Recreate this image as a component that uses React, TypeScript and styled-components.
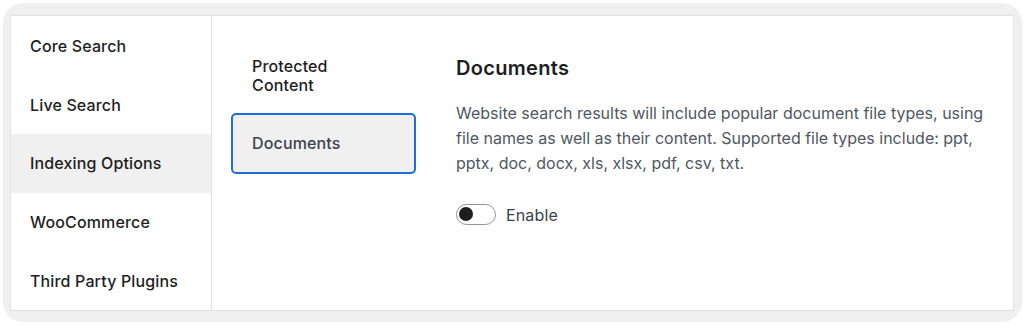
import React from "react"
import styled, { createGlobalStyle } from "styled-components"

const GlobalStyle = createGlobalStyle`
  html, body {
    margin: 0;
    padding: 0;
    background: #ffffff;
  }
  body {
    font-family: Inter, "Noto Sans", "Liberation Sans", sans-serif;
    -webkit-font-smoothing: antialiased;
  }
`

const Frame = styled.div`
  box-sizing: border-box;
  margin: 3px 2px 4px 3px;
  height: 319px;
  padding: 12px 8px 11px 7px;
  background: #f0f0f0;
  border-radius: 20px;
`

const Panel = styled.div`
  box-sizing: border-box;
  height: 100%;
  display: flex;
  background: #ffffff;
  border: 1px solid #e2e2e2;
`

const SideNav = styled.nav`
  width: 200px;
  flex-shrink: 0;
  border-right: 1px solid #e0e0e0;
  display: flex;
  flex-direction: column;
  padding-top: 1px;
`

const NavItem = styled.div<{ $active?: boolean }>`
  height: 59px;
  display: flex;
  align-items: center;
  padding-left: 19px;
  font-size: 16px;
  letter-spacing: 0.15px;
  font-weight: 500;
  color: #1e1e1e;
  background: ${(p) => (p.$active ? "#f0f0f0" : "transparent")};
`

const SubNav = styled.div`
  width: 204px;
  flex-shrink: 0;
  padding: 41px 0 0 19px;
  display: flex;
  flex-direction: column;
  gap: 18px;
`

const SubItem = styled.div<{ $active?: boolean }>`
  box-sizing: border-box;
  width: 185px;
  padding: ${(p) => (p.$active ? "17px 19px" : "0 21px")};
  min-height: ${(p) => (p.$active ? "61px" : "auto")};
  display: flex;
  align-items: center;
  font-size: 16px;
  letter-spacing: 0.15px;
  font-weight: 500;
  line-height: 19px;
  color: ${(p) => (p.$active ? "#3c434a" : "#1e1e1e")};
  background: ${(p) => (p.$active ? "#f0f0f0" : "transparent")};
  border: ${(p) => (p.$active ? "2px solid #1d6ce0" : "none")};
  border-radius: 5px;
`

const Content = styled.section`
  flex: 1;
  padding: 38px 20px 0 21px;
`

const Heading = styled.h2`
  margin: 0 0 19px;
  font-size: 20px;
  letter-spacing: 0.3px;
  font-weight: 600;
  line-height: 28px;
  color: #1e1e1e;
`

const Description = styled.p`
  margin: 0;
  max-width: 540px;
  font-size: 16px;
  letter-spacing: 0;
  line-height: 25px;
  color: #50575e;
`

const ToggleRow = styled.label`
  display: flex;
  align-items: center;
  gap: 10px;
  margin-top: 28px;
  font-size: 16px;
  letter-spacing: 0.15px;
  color: #3c434a;
`

const Track = styled.span`
  box-sizing: border-box;
  position: relative;
  width: 40px;
  height: 21px;
  border: 1.5px solid #949494;
  border-radius: 11px;
  background: #ffffff;
`

const Knob = styled.span`
  position: absolute;
  left: 2px;
  top: 2px;
  width: 14px;
  height: 14px;
  border-radius: 50%;
  background: #1e1e1e;
`

const sections = [
  "Core Search",
  "Live Search",
  "Indexing Options",
  "WooCommerce",
  "Third Party Plugins",
]

export default function App() {
  return (
    <>
      <GlobalStyle />
      <Frame>
        <Panel>
          <SideNav>
            {sections.map((s) => (
              <NavItem key={s} $active={s === "Indexing Options"}>
                {s}
              </NavItem>
            ))}
          </SideNav>
          <SubNav>
            <SubItem>
              Protected
              <br />
              Content
            </SubItem>
            <SubItem $active>Documents</SubItem>
          </SubNav>
          <Content>
            <Heading>Documents</Heading>
            <Description>
              Website search results will include popular document file types, using file
              names as well as their content. Supported file types include: ppt, pptx, doc,
              docx, xls, xlsx, pdf, csv, txt.
            </Description>
            <ToggleRow>
              <Track>
                <Knob />
              </Track>
              Enable
            </ToggleRow>
          </Content>
        </Panel>
      </Frame>
    </>
  )
}
